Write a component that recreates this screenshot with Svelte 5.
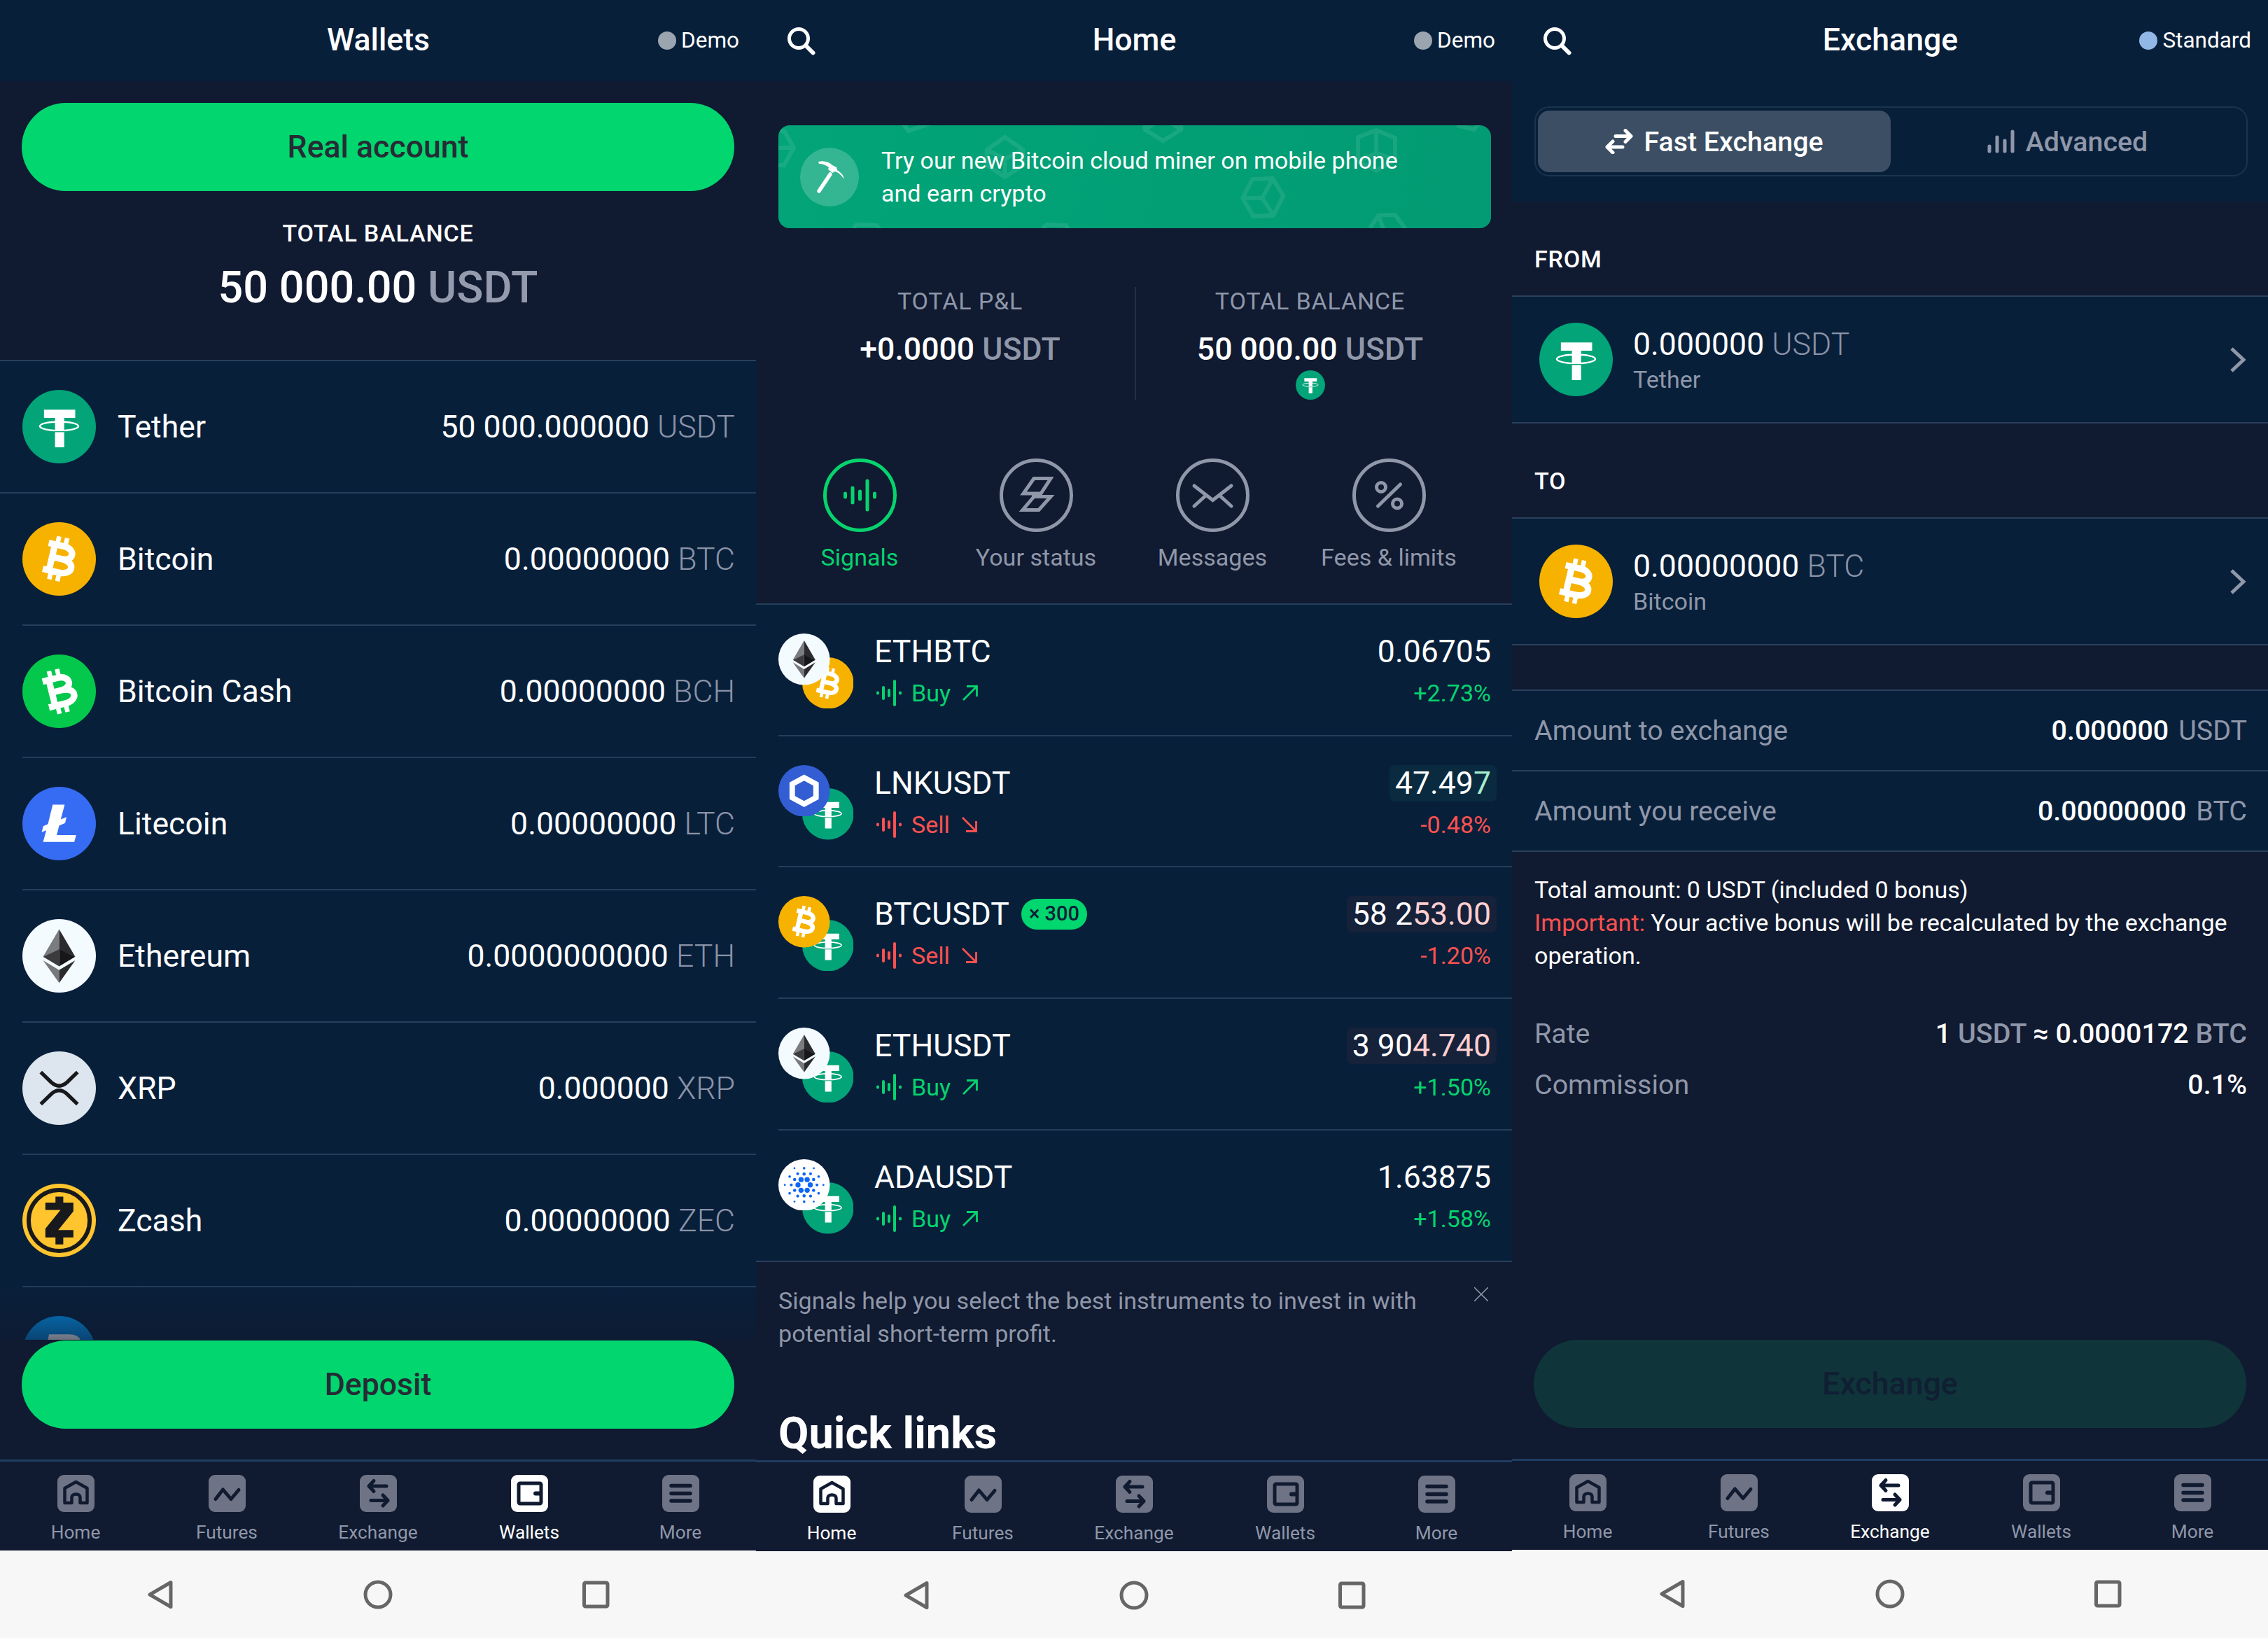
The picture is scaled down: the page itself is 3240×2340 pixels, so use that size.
<script lang="ts">
	type Coin = 'usdt' | 'btc' | 'bch' | 'ltc' | 'eth' | 'xrp' | 'zec' | 'dash' | 'link' | 'ada';

	const wallets: { coin: Coin; name: string; amount: string; unit: string }[] = [
		{ coin: 'usdt', name: 'Tether', amount: '50 000.000000', unit: 'USDT' },
		{ coin: 'btc', name: 'Bitcoin', amount: '0.00000000', unit: 'BTC' },
		{ coin: 'bch', name: 'Bitcoin Cash', amount: '0.00000000', unit: 'BCH' },
		{ coin: 'ltc', name: 'Litecoin', amount: '0.00000000', unit: 'LTC' },
		{ coin: 'eth', name: 'Ethereum', amount: '0.0000000000', unit: 'ETH' },
		{ coin: 'xrp', name: 'XRP', amount: '0.000000', unit: 'XRP' },
		{ coin: 'zec', name: 'Zcash', amount: '0.00000000', unit: 'ZEC' },
		{ coin: 'dash', name: 'Dash', amount: '0.00000000', unit: 'DASH' }
	];

	type Pair = {
		base: Coin; quote: Coin; name: string; buy: boolean;
		price: string; changed: string; flash: string; change: string; badge?: string;
	};
	const pairs: Pair[] = [
		{ base: 'eth', quote: 'btc', name: 'ETHBTC', buy: true, price: '0.06705', changed: '', flash: '', change: '+2.73%' },
		{ base: 'link', quote: 'usdt', name: 'LNKUSDT', buy: false, price: '47.49', changed: '7', flash: 'up', change: '-0.48%' },
		{ base: 'btc', quote: 'usdt', name: 'BTCUSDT', buy: false, price: '58 2', changed: '53.00', flash: 'down', change: '-1.20%', badge: '× 300' },
		{ base: 'eth', quote: 'usdt', name: 'ETHUSDT', buy: true, price: '3 90', changed: '4.740', flash: 'down', change: '+1.50%' },
		{ base: 'ada', quote: 'usdt', name: 'ADAUSDT', buy: true, price: '1.63875', changed: '', flash: '', change: '+1.58%' }
	];

	const actions = ['Signals', 'Your status', 'Messages', 'Fees & limits'];
	const tabs = ['Home', 'Futures', 'Exchange', 'Wallets', 'More'];

	// cardano dots: [radius of ring, dot radius, count, start angle]
	const rings = [
		[9.5, 4, 6, 0],
		[17, 2.5, 6, 30],
		[20, 2.3, 6, 0],
		[26, 2, 6, 30],
		[30, 1.5, 6, 0]
	];
	const dots = rings.flatMap(([r, size, n, start]) =>
		Array.from({ length: n }, (_, i) => {
			const a = ((start + (i * 360) / n) * Math.PI) / 180;
			return { x: 40 + r * Math.cos(a), y: 40 + r * Math.sin(a), size };
		})
	);
</script>

{#snippet bitcoinSign()}
	<path
		fill="none"
		stroke="#fff"
		stroke-width="7"
		d="M25 25.5H42C56 25.5 56 39.5 43 39.5H32M43 39.5C59 39.5 59 54.5 43 54.5H25M32 25V55"
	/>
	<path stroke="#fff" stroke-width="5" d="M34.5 16V27M43.5 16V27M34.5 53V64M43.5 53V64" />
{/snippet}

{#snippet coinIcon(coin: Coin)}
	<svg class="coin" viewBox="0 0 80 80">
		{#if coin === 'usdt'}
			<circle cx="40" cy="40" r="40" fill="#02a478" />
			<path fill="#fff" d="M23.5 21.5H57.5V30.5H45.5V62.5H35.5V30.5H23.5Z" />
			<ellipse cx="40" cy="39.5" rx="21" ry="4.8" fill="none" stroke="#fff" stroke-width="1.8" />
			<path stroke="#02a478" stroke-width="1" d="M35 45.5H46" />
		{:else if coin === 'btc'}
			<circle cx="40" cy="40" r="40" fill="#f7b200" />
			<g transform="rotate(13 40 40)">{@render bitcoinSign()}</g>
		{:else if coin === 'bch'}
			<circle cx="40" cy="40" r="40" fill="#04c84b" />
			<g transform="rotate(-14 40 40)">{@render bitcoinSign()}</g>
		{:else if coin === 'ltc'}
			<circle cx="40" cy="40" r="40" fill="#366cf3" />
			<path
				fill="#fff"
				d="M33 19.5H46L41.8 35.5L48 33L46.5 39.5L40 42.2L37.4 52.5H58.5L56.5 60H22.5L26 47.4L21 49.3L22.7 42.8L27.8 40.6Z"
			/>
		{:else if coin === 'eth'}
			<circle cx="40" cy="40" r="40" fill="#f4fbff" />
			<path fill="#7b7c7f" d="M40 11V33.5L22.5 41Z" />
			<path fill="#2b2b2e" d="M40 11V33.5L57.5 41Z" />
			<path fill="#3b3b3e" d="M40 33V51.5L22.5 41Z" />
			<path fill="#17171a" d="M40 33V51.5L57.5 41Z" />
			<path fill="#77787b" d="M22.5 45L40 55.5V69.5Z" />
			<path fill="#2b2b2e" d="M57.5 45L40 55.5V69.5Z" />
		{:else if coin === 'xrp'}
			<circle cx="40" cy="40" r="40" fill="#dde6ee" />
			<path
				fill="none"
				stroke="#18191c"
				stroke-width="4"
				d="M20 22.5L31.5 33.7Q40 41.2 48.5 33.7L60 22.5M20 57.5L31.5 46.3Q40 38.8 48.5 46.3L60 57.5"
			/>
		{:else if coin === 'zec'}
			<circle cx="40" cy="40" r="40" fill="#ffc42e" />
			<circle cx="40" cy="40" r="33.2" fill="none" stroke="#18191c" stroke-width="4.5" />
			<path
				fill="#18191c"
				d="M36 14H44.5V20.5H55.5V30L39 50.5H55.5V58.5H44.5V66H36V58.5H25V49L41.5 28.5H25V20.5H36Z"
			/>
		{:else if coin === 'dash'}
			<circle cx="40" cy="40" r="40" fill="#008de4" />
			<path fill="#fff" d="M29 20H51Q66 20 63 34L60 44Q56 58 43 58H18L20.500 50H44Q50 50 52 44L54 36Q56 29 50 29H27Z" />
			<path fill="#fff" d="M20 35H38L36 43H17Z" />
		{:else if coin === 'link'}
			<circle cx="40" cy="40" r="40" fill="#335dd2" />
			<path fill="none" stroke="#fff" stroke-width="8.500" d="M40 19.500L58.500 29.500V50.500L40 60.500L21.500 50.500V29.500Z" />
		{:else}
			<circle cx="40" cy="40" r="40" fill="#fff" />
			{#each dots as dot}
				<circle cx={dot.x} cy={dot.y} r={dot.size} fill="#0d66f5" />
			{/each}
		{/if}
	</svg>
{/snippet}

{#snippet header(title: string, account: string, search: boolean)}
	<header class="header">
		<div class="header-side">
			{#if search}
				<svg class="search" viewBox="0 0 40 40" fill="none" stroke="#fff">
					<circle cx="16" cy="16" r="13.500" stroke-width="5" />
					<path stroke-width="6" stroke-linecap="round" d="M27 27L36.500 36.500" />
				</svg>
			{/if}
		</div>
		<h1>{title}</h1>
		<div class="header-side account">
			<span class="dot" class:standard={account === 'Standard'}></span>{account}
		</div>
	</header>
{/snippet}

{#snippet tabBar(active: string)}
	<nav class="tab-bar">
		{#each tabs as tab}
			<div class="tab" class:active={tab === active}>
				<svg viewBox="0 0 53 53" fill="none" stroke="#101a30" stroke-width="5" stroke-linecap="round" stroke-linejoin="round">
					<rect class="tile" width="53" height="53" rx="9" stroke="none" />
					{#if tab === 'Home'}
						<path d="M27 40V32M10.500 39V19.500L26.500 10.500L42.500 19.500V39Q42.500 40 41 40H34V32.500Q33 27 26.500 27T19.500 32.500V40H12Q10.500 40 10.500 39Z" stroke="none" />
						<path stroke-width="4.500" d="M20.500 40H10.500V19L26.500 10L42.500 19V40H32.500V32Q32 27.500 26.500 27.500T20.500 32V40" />
					{:else if tab === 'Futures'}
						<path d="M10 34.500L20.500 21L32 34.500L43 21.500" />
					{:else if tab === 'Exchange'}
						<path d="M38 16H13M20 8.500L13 16L20 23.500M16 36.500H40M33 29L40 36.500L33 44" />
					{:else if tab === 'Wallets'}
						<rect x="11" y="12" width="32" height="29" rx="2" />
						<path d="M35 26.500H42" stroke-width="6" />
					{:else}
						<path d="M13 15.500H40M13 26.500H40M13 37H40" stroke-width="5.500" />
					{/if}
				</svg>
				<span>{tab}</span>
			</div>
		{/each}
	</nav>
	<div class="system-bar">
		<svg viewBox="0 0 44 44"><path d="M37 4.500V39.500L7 22Z" /></svg>
		<svg viewBox="0 0 44 44"><circle cx="22" cy="22" r="18" /></svg>
		<svg viewBox="0 0 44 44"><rect x="5.500" y="5" width="33.500" height="34" rx="2" /></svg>
	</div>
{/snippet}

{#snippet signalBars()}
	<svg class="bars" viewBox="0 0 38 38" fill="none" stroke="currentColor" stroke-width="4" stroke-linecap="round">
		<path d="M3 18.500V19.500M11 11V27M19 15V23M27 2V36M35 18.500V19.500" />
	</svg>
{/snippet}

<main>
	<section class="screen">
		{@render header('Wallets', 'Demo', false)}
		<div class="wallet-top">
			<button class="primary">Real account</button>
			<div class="label white">TOTAL BALANCE</div>
			<div class="total">50 000.00 <span>USDT</span></div>
		</div>
		<div class="wallet-list">
			{#each wallets as wallet}
				<div class="wallet">
					{@render coinIcon(wallet.coin)}
					<div class="wallet-name">{wallet.name}</div>
					<div>{wallet.amount} <span class="unit">{wallet.unit}</span></div>
				</div>
			{/each}
		</div>
		<div class="bottom-action fade">
			<button class="primary">Deposit</button>
		</div>
		{@render tabBar('Wallets')}
	</section>

	<section class="screen">
		{@render header('Home', 'Demo', true)}
		<div class="banner">
			<svg class="cubes" viewBox="0 0 1019 147" fill="none" stroke="#fff" stroke-width="6" stroke-opacity=".09">
				<path d="M-28 6L8 8L22 32L8 57L-28 57M22 32H-5" />
				<path d="M176 -6L186 8L216 -2" />
				<path d="M324 17L350 35V57L324 74L298 57V35ZM298 35L324 48L350 35M324 48V74" />
				<path d="M524 -12V6L550 22L576 6V-12M524 6L550 -10L576 6" />
				<path d="M829 31V17L855 7L882 18V49L855 65L829 51ZM855 7V40L829 51M855 40L882 49" />
				<path d="M678 77L707 76L722 101L708 129L679 130L664 104ZM664 104H692L707 76M692 104L708 129" />
				<path d="M107 147L112 142L141 143L146 150M378 147L384 142L411 143L416 150" />
				<path d="M846 147L858 129L882 128L898 150M858 129L866 150" />
				<path d="M970 0L995 6L1003 -4" />
			</svg>
			<div class="banner-icon">
				<svg viewBox="0 0 84 84">
					<path d="M43 38L27 62" stroke="#fff" stroke-width="5.500" stroke-linecap="round" />
					<path fill="#fff" d="M26 20C34 18 41 20 46 25L52 28L53 32C60 37 63 41 62 44C58 38 54 35 50 34L46 36L40 31L41 28C37 25 33 23 27 23Z" />
				</svg>
			</div>
			<p>Try our new Bitcoin cloud miner on mobile phone and earn crypto</p>
		</div>
		<div class="stats">
			<div class="stat">
				<div class="label">TOTAL P&amp;L</div>
				<div class="stat-value">+0.0000 <span>USDT</span></div>
			</div>
			<div class="stat">
				<div class="label">TOTAL BALANCE</div>
				<div class="stat-value">50 000.00 <span>USDT</span></div>
				<div class="stat-coin">{@render coinIcon('usdt')}</div>
			</div>
		</div>
		<div class="actions">
			{#each actions as action, i}
				<div class="action" class:active={i === 0}>
					<svg viewBox="0 0 105 105" fill="none" stroke="currentColor" stroke-width="5">
						<circle cx="52.500" cy="52.500" r="50" />
						{#if i === 0}
							<path stroke-linecap="round" d="M31.500 50V55M42 42V63M52.500 47V58M63 32V73M73.500 50V55" />
						{:else if i === 1}
							<path d="M49 28.500H73L59 50H34ZM46 54.500H73L56 73.500H33L49 54.500" />
						{:else if i === 2}
							<path stroke-linecap="round" d="M26 39L52.500 59.500L79 39M26 68L43 52.500M79 68L62 52.500" />
						{:else}
							<circle cx="41" cy="41" r="6.500" />
							<circle cx="64" cy="64.500" r="6.500" />
							<path stroke-linecap="round" d="M68.500 37L36.500 68" />
						{/if}
					</svg>
					<span>{action}</span>
				</div>
			{/each}
		</div>
		<div class="pair-list">
			{#each pairs as pair}
				<div class="pair">
					<div class="pair-icons">
						<div>{@render coinIcon(pair.quote)}</div>
						<div>{@render coinIcon(pair.base)}</div>
					</div>
					<div class="pair-info">
						<div class="pair-name">
							{pair.name}
							{#if pair.badge}<span class="badge">{pair.badge}</span>{/if}
						</div>
						<div class="signal" class:sell={!pair.buy}>
							{@render signalBars()}
							<span>{pair.buy ? 'Buy' : 'Sell'}</span>
							<svg class="arrow" viewBox="0 0 24 24" fill="none" stroke="currentColor" stroke-width="2.800">
								<path d={pair.buy ? 'M2 22L21 3M7 2.500H21.500V17' : 'M2 2L21 21M7 21.500H21.500V7'} />
							</svg>
						</div>
					</div>
					<div class="pair-price">
						<div class="price {pair.flash}">{pair.price}<span>{pair.changed}</span></div>
						<div class="change" class:sell={pair.change[0] === '-'}>{pair.change}</div>
					</div>
				</div>
			{/each}
		</div>
		<div class="note">
			<p>Signals help you select the best instruments to invest in with potential short-term profit.</p>
			<svg viewBox="0 0 20 20" stroke="#949caf" stroke-width="1.500"><path d="M0 0L20 20M20 0L0 20" /></svg>
		</div>
		<h2>Quick links</h2>
		{@render tabBar('Home')}
	</section>

	<section class="screen">
		{@render header('Exchange', 'Standard', true)}
		<div class="switch-wrap">
			<div class="switch">
				<div class="option active">
					<svg viewBox="0 0 40 36" fill="none" stroke="currentColor" stroke-width="5" stroke-linecap="round" stroke-linejoin="round">
						<path d="M15 10.500H37M29 2.500L37 10.500L29 18.500M25 26H3M11 18L3 26L11 34" />
					</svg>
					Fast Exchange
				</div>
				<div class="option">
					<svg viewBox="0 0 40 36" fill="none" stroke="currentColor" stroke-width="5" stroke-linecap="round">
						<path d="M3 25V32M14 12V32M25 17V32M36 4V32" />
					</svg>
					Advanced
				</div>
			</div>
		</div>
		<div class="label white side">FROM</div>
		<div class="pick">
			{@render coinIcon('usdt')}
			<div class="pick-info">
				<div class="pick-amount">0.000000 <span class="unit">USDT</span></div>
				<div class="pick-name">Tether</div>
			</div>
			<svg class="chevron" viewBox="0 0 24 38"><path d="M3 3L20 19L3 35" /></svg>
		</div>
		<div class="label white side">TO</div>
		<div class="pick">
			{@render coinIcon('btc')}
			<div class="pick-info">
				<div class="pick-amount">0.00000000 <span class="unit">BTC</span></div>
				<div class="pick-name">Bitcoin</div>
			</div>
			<svg class="chevron" viewBox="0 0 24 38"><path d="M3 3L20 19L3 35" /></svg>
		</div>
		<div class="amounts">
			<div class="amount">Amount to exchange <div><b>0.000000</b><span>USDT</span></div></div>
			<div class="amount">Amount you receive <div><b>0.00000000</b><span>BTC</span></div></div>
		</div>
		<p class="bonus">
			Total amount: 0 USDT (included 0 bonus)<br />
			<span>Important:</span> Your active bonus will be recalculated by the exchange operation.
		</p>
		<div class="fee">Rate <div><b>1</b> USDT <b>≈ 0.0000172</b> BTC</div></div>
		<div class="fee">Commission <div><b>0.1%</b></div></div>
		<div class="bottom-action">
			<button class="primary disabled">Exchange</button>
		</div>
		{@render tabBar('Exchange')}
	</section>
</main>

<style>
	:global(body) {
		background: #101a30;
	}

	main {
		display: grid;
		grid-template-columns: repeat(3, 1080px);
		width: 3240px;
		height: 2340px;
		overflow: hidden;
		font-family: Roboto, sans-serif;
		color: #fff;
	}

	.screen {
		display: flex;
		flex-direction: column;
		height: 2340px;
		overflow: hidden;
		background: #101a30;
	}

	.screen > * {
		flex-shrink: 0;
		box-sizing: border-box;
	}

	h1, h2, p {
		margin: 0;
	}

	svg {
		display: block;
		flex-shrink: 0;
	}

	.coin {
		width: 105px;
		height: 105px;
	}

	/* header */
	.header {
		display: grid;
		grid-template-columns: 1fr auto 1fr;
		align-items: center;
		height: 116px;
		padding: 0 24px 2px 45px;
		background: #081f3a;
	}

	.header h1 {
		font-size: 44.6px;
		font-weight: 500;
		line-height: 52px;
		transform: translateX(-10px);
	}

	.search {
		width: 40px;
		height: 40px;
		margin-top: 3px;
	}

	.account {
		display: flex;
		justify-content: flex-end;
		align-items: center;
		gap: 7px;
		font-size: 31.5px;
	}

	.dot {
		width: 26px;
		height: 26px;
		margin-top: 2px;
		border-radius: 50%;
		background: #9aa5b0;
	}

	.dot.standard {
		background: #91b7e6;
	}

	.primary {
		display: block;
		width: 1018px;
		height: 126px;
		margin: 0 auto;
		padding: 0;
		border: 0;
		border-radius: 63px;
		background: #02d66e;
		color: #262b35;
		font: 500 44.6px/126px Roboto, sans-serif;
	}

	.label {
		font-size: 34.1px;
		line-height: 40px;
		letter-spacing: 0.8px;
		color: #8f97a9;
	}

	.label.white {
		color: #fff;
		font-weight: 500;
	}

	/* wallets */
	.wallet-top {
		height: 398px;
		padding-top: 31px;
		text-align: center;
	}

	.wallet-top .label {
		margin-top: 40px;
	}

	.total {
		margin-top: 21px;
		font-size: 63px;
		font-weight: 500;
		line-height: 74px;
	}

	.total span {
		color: #949bae;
	}

	.wallet-list {
		height: 1400px;
		border-top: 2px solid #2a405b;
		background: #081f3a;
		overflow: hidden;
	}

	.wallet {
		display: flex;
		align-items: center;
		gap: 31px;
		box-sizing: border-box;
		height: 189px;
		margin-left: 32px;
		padding-right: 30px;
		border-bottom: 2px solid #253e5a;
		font-size: 44.6px;
	}

	.wallet:first-child {
		margin-left: 0;
		padding-left: 32px;
	}

	.wallet-name {
		flex: 1;
	}

	.unit {
		font-weight: 300;
		color: #8b93a7;
	}

	.bottom-action {
		height: 170px;
		margin-top: auto;
	}

	.bottom-action.fade {
		position: relative;
		height: 250px;
		margin-top: -79px;
		padding-top: 80px;
		background: linear-gradient(#101a3000, #101a30 50%);
	}

	/* tab bar */
	.tab-bar {
		display: grid;
		grid-template-columns: repeat(5, 1fr);
		height: 130px;
		border-top: 3px solid #1e3e60;
		background: #101a30;
	}

	.tab {
		display: flex;
		flex-direction: column;
		align-items: center;
		padding-top: 19px;
		font-size: 26.25px;
		line-height: 30px;
		color: #8f97a9;
	}

	.tab svg {
		width: 53px;
		height: 53px;
		margin-bottom: 14px;
	}

	.tile {
		fill: #6e7486;
	}

	.tab.active {
		color: #fff;
	}

	.tab.active .tile {
		fill: #fff;
	}

	.system-bar {
		display: flex;
		justify-content: space-between;
		align-items: center;
		height: 126px;
		padding: 0 207px;
		background: #f7f7f7;
	}

	.system-bar svg {
		width: 44px;
		height: 44px;
		fill: none;
		stroke: #666;
		stroke-width: 5;
		stroke-linejoin: round;
	}

	/* home */
	.banner {
		position: relative;
		display: flex;
		align-items: center;
		gap: 32px;
		height: 147px;
		margin: 63px 30px 0 32px;
		padding: 0 31px;
		border-radius: 16px;
		background: linear-gradient(100deg, #02a478, #029b73);
		overflow: hidden;
	}

	.cubes {
		position: absolute;
		inset: 0;
	}

	.banner-icon {
		width: 84px;
		height: 84px;
		border-radius: 50%;
		background: #ffffff33;
	}

	.banner p {
		position: relative;
		width: 770px;
		font-size: 34.1px;
		line-height: 47px;
	}

	.stats {
		display: grid;
		grid-template-columns: 1fr 1fr;
		height: 161px;
		margin: 84px 40px 0 42px;
		text-align: center;
	}

	.stat + .stat {
		border-left: 2px solid #233047;
	}

	.stat-value {
		margin-top: 23px;
		font-size: 44.6px;
		font-weight: 500;
		line-height: 52px;
	}

	.stat-value span {
		color: #8f97a9;
	}

	.stat .coin {
		width: 42px;
		height: 42px;
		margin: 4px auto 0;
	}

	.actions {
		display: grid;
		grid-template-columns: repeat(4, 252px);
		height: 291px;
		padding: 84px 0 0 22px;
	}

	.action {
		display: flex;
		flex-direction: column;
		align-items: center;
		gap: 16px;
		font-size: 34.1px;
		line-height: 40px;
		color: #8f97a9;
	}

	.action svg {
		width: 105px;
		height: 105px;
	}

	.action.active {
		color: #06d36e;
	}

	.pair-list {
		border-top: 2px solid #253e5a;
		border-bottom: 2px solid #2a405b;
		background: #081f3a;
	}

	.pair {
		display: flex;
		box-sizing: border-box;
		height: 187.7px;
		margin-left: 32px;
		padding: 41px 30px 0 0;
		border-bottom: 2px solid #253e5a;
	}

	.pair:last-child {
		height: 186px;
		border-bottom: 0;
	}

	.pair-icons {
		display: grid;
		width: 107px;
		height: 107px;
		margin-right: 30px;
	}

	.pair-icons > div {
		grid-area: 1 / 1;
		align-self: end;
		justify-self: end;
	}

	.pair-icons > div + div {
		align-self: start;
		justify-self: start;
	}

	.pair-icons .coin {
		width: 73.5px;
		height: 73.5px;
	}

	.pair-info {
		flex: 1;
	}

	.pair-name {
		display: flex;
		align-items: center;
		gap: 17px;
		height: 52px;
		font-size: 44.6px;
		line-height: 52px;
	}

	.badge {
		height: 44px;
		padding: 0 11px;
		border-radius: 22px;
		background: #02d66e;
		color: #0b1f38;
		font-size: 29px;
		font-weight: 500;
		line-height: 43px;
	}

	.signal {
		display: flex;
		align-items: center;
		gap: 13px;
		margin-top: 13px;
		font-size: 34.1px;
		line-height: 40px;
		color: #06d36e;
	}

	.bars {
		width: 38px;
		height: 38px;
		margin-left: 2px;
	}

	.arrow {
		width: 24px;
		height: 24px;
		margin-left: 3px;
	}

	.pair-price {
		display: flex;
		flex-direction: column;
		align-items: flex-end;
	}

	.price {
		margin-right: -8px;
		padding: 0 8px;
		border-radius: 8px;
		font-size: 44.6px;
		line-height: 52px;
	}

	.price.up {
		background: #0a2b3f;
	}

	.price.up span {
		color: #a9eccd;
	}

	.price.down {
		background: #16213a;
	}

	.price.down span {
		color: #ffcfd0;
	}

	.change {
		margin-top: 13px;
		font-size: 34.1px;
		line-height: 40px;
		color: #06d36e;
	}

	.sell {
		color: #fb5150;
	}

	.note {
		display: flex;
		justify-content: space-between;
		height: 213px;
		padding: 32px 34px 0 32px;
		font-size: 34.1px;
		line-height: 47px;
		color: #8f97a9;
	}

	.note p {
		width: 940px;
	}

	.note svg {
		width: 20px;
		height: 20px;
		margin-top: 4px;
	}

	h2 {
		height: 70px;
		margin-top: auto;
		padding-left: 32px;
		font-size: 63px;
		font-weight: 700;
		line-height: 64px;
	}

	/* exchange */
	.switch-wrap {
		height: 172px;
		padding: 36px 29px 0 32px;
		background: #081f3a;
	}

	.switch {
		display: grid;
		grid-template-columns: 504px 1fr;
		box-sizing: border-box;
		height: 100px;
		padding: 4px 3px;
		border: 2px solid #1b344d;
		border-radius: 21px;
	}

	.option {
		display: flex;
		justify-content: center;
		align-items: center;
		gap: 15px;
		border-radius: 16px;
		font-size: 39.4px;
		font-weight: 500;
		color: #8f97a9;
	}

	.option.active {
		background: #3b4e63;
		color: #fff;
	}

	.option svg {
		width: 40px;
		height: 36px;
	}

	.side {
		height: 134px;
		padding: 62px 0 0 32px;
	}

	.pick {
		display: flex;
		align-items: center;
		height: 183px;
		padding: 0 31px 0 39px;
		border: solid #2a405b;
		border-width: 2px 0;
		background: #081f3a;
	}

	.pick-info {
		flex: 1;
		margin-left: 29px;
	}

	.pick-amount {
		font-size: 44.6px;
		line-height: 52px;
	}

	.pick-name {
		font-size: 34.1px;
		line-height: 40px;
		margin-top: 4px;
		color: #8f97a9;
	}

	.chevron {
		width: 24px;
		height: 38px;
		fill: none;
		stroke: #8f97a9;
		stroke-width: 5;
	}

	.amounts {
		margin-top: 63px;
		border-top: 2px solid #2a405b;
		background: #081f3a;
	}

	.amount {
		display: flex;
		justify-content: space-between;
		align-items: center;
		box-sizing: border-box;
		height: 115px;
		padding: 0 30px 0 32px;
		border-bottom: 2px solid #2a405b;
		font-size: 39.4px;
		color: #8f97a9;
	}

	.amount span {
		margin-left: 14px;
	}

	b {
		font-weight: 500;
		color: #fff;
	}

	.bonus {
		height: 223px;
		padding: 31px 30px 0 32px;
		font-size: 34.1px;
		line-height: 47px;
	}

	.bonus span {
		color: #fb5150;
	}

	.fee {
		display: flex;
		justify-content: space-between;
		align-items: center;
		height: 73px;
		padding: 0 30px 0 32px;
		font-size: 39.4px;
		color: #8f97a9;
	}

	.fee div {
		font-weight: 500;
	}

	.primary.disabled {
		background: #0f343a;
		color: #101f33;
	}
</style>
